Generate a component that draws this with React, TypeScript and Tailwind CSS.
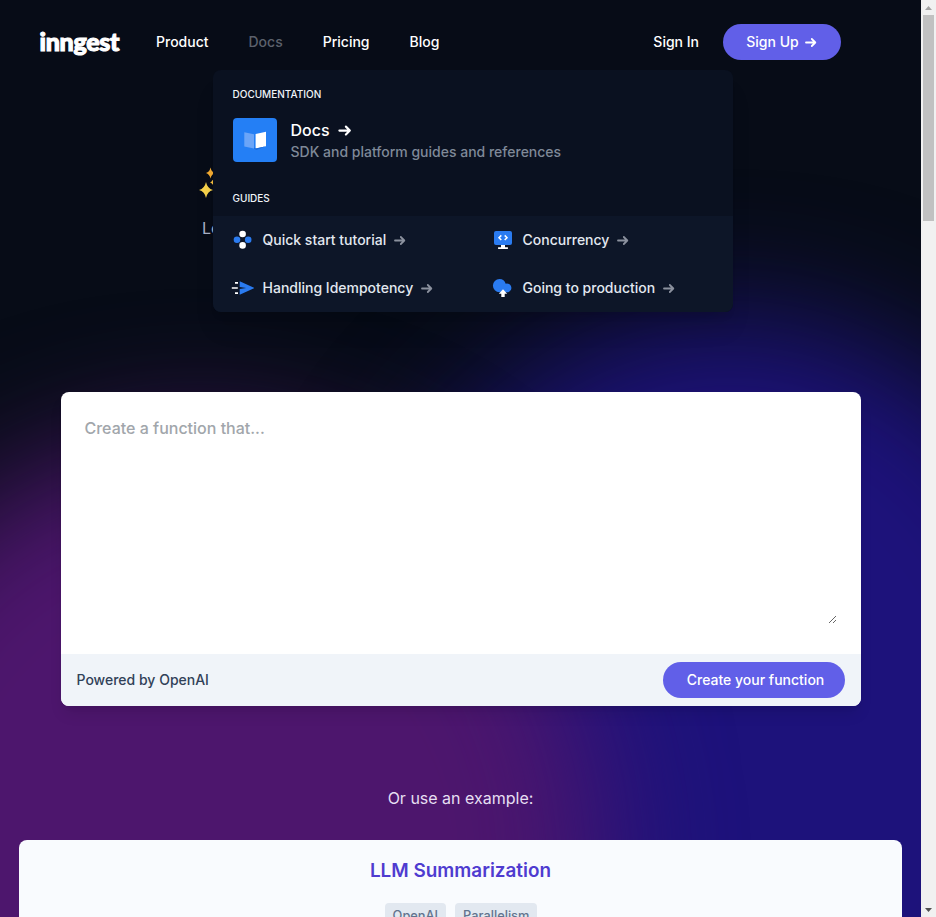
import React from 'react';

function Arrow({ size = 16, width = 1.8, className = '' }: { size?: number; width?: number; className?: string }) {
  return (
    <svg width={size} height={size} viewBox="0 0 16 16" fill="none" stroke="currentColor" strokeWidth={width} className={className}>
      <path d="M3 8.500h9M8.800 5l3.500 3.500L8.800 12" strokeLinecap="round" strokeLinejoin="round" />
    </svg>
  );
}

function BookIcon() {
  return (
    <svg width="24" height="24" viewBox="0 0 24 24">
      <path d="M1.3 4.2 11 6.3v14.3l-9.700-2z" fill="#6ba5f8" />
      <path d="M12.600 6 23 3.700v14.500l-10.400 2.200z" fill="#fff" />
      <path d="M11 20.600v-1l1.800.8 10-2.100-9.400 3.700z" fill="#1c6ad9" />
    </svg>
  );
}

function QuickStartIcon() {
  return (
    <svg width="24" height="24" viewBox="0 0 24 24">
      <circle cx="12.600" cy="6" r="3.300" fill="#fff" />
      <circle cx="12.600" cy="17.400" r="3.300" fill="#fff" />
      <circle cx="7" cy="11.800" r="3.300" fill="#2a7bf0" />
      <circle cx="18.200" cy="11.800" r="3.300" fill="#2a7bf0" />
    </svg>
  );
}

function SendIcon() {
  return (
    <svg width="24" height="24" viewBox="0 0 24 24">
      <path d="M5 6.800h3M1.800 12h6M5 17.200h3" stroke="#fff" strokeWidth="1.700" />
      <path d="M9.700 5.300 24.500 12 9.700 18.800V13l6.500-1-6.500-1z" fill="#2a7bf0" />
    </svg>
  );
}

function ScreenIcon() {
  return (
    <svg width="24" height="24" viewBox="0 0 24 24">
      <path d="M11 16h4v3.200h2.900V21H8.100v-1.800H11z" fill="#fff" />
      <rect x="4" y="3" width="18" height="14" rx="2" fill="#2a7bf0" />
      <path d="m11.300 7.400-2.300 2.300 2.300 2.300m3.400-4.600 2.300 2.300-2.300 2.300" fill="none" stroke="#fff" strokeWidth="1.500" />
    </svg>
  );
}

function CloudIcon() {
  return (
    <svg width="24" height="24" viewBox="0 0 24 24">
      <path d="M9.500 3a6.500 6.500 0 0 1 6.200 4.700A4.400 4.400 0 1 1 18.200 16.200H9.500A6.600 6.600 0 0 1 9.500 3z" fill="#2a7bf0" />
      <path d="m13 13.200 4.200 4.500h-2.500V21h-3.400v-3.300H8.800z" fill="#fff" />
    </svg>
  );
}

function Sparkles() {
  return (
    <svg width="32" height="34" viewBox="0 0 32 34" className="shrink-0">
      <path d="M8 16q1.300 6.400 7 8-5.700 1.600-7 8-1.300-6.400-7-8 5.700-1.600 7-8z" fill="#f8d34b" />
      <path d="M12.500 1.500q1 4.500 4.500 5.500-3.500 1-4.500 5.500-1-4.500-4.500-5.500 3.500-1 4.500-5.500z" fill="#f5ac32" />
      <path d="M14.500 13.700q.4 2.300 2.500 2.800-2.100.4-2.500 2.300-.5-1.900-2.500-2.300 2-.5 2.500-2.800z" fill="#f8c040" />
    </svg>
  );
}

const guides = [
  { label: 'Quick start tutorial', icon: <QuickStartIcon /> },
  { label: 'Concurrency', icon: <ScreenIcon /> },
  { label: 'Handling Idempotency', icon: <SendIcon /> },
  { label: 'Going to production', icon: <CloudIcon /> },
];

function DocsMenu() {
  return (
    <div className="absolute left-[213px] top-[70px] z-10 h-[242px] w-[520px] overflow-hidden rounded-lg bg-[#0a1120] shadow-xl">
      <div className="px-[19.500px] pt-4">
        <h2 className="text-[10px] font-medium leading-[17px] text-slate-100">DOCUMENTATION</h2>
        <a className="mt-[15px] flex h-11 items-center gap-3.5">
          <span className="flex size-11 items-center justify-center rounded bg-[#247ff5]"><BookIcon /></span>
          <span className="flex flex-col">
            <span className="flex items-center gap-1.5 text-base font-medium leading-6 text-white">Docs <Arrow size={18} width={1.900} className="-mt-px" /></span>
            <span className="text-sm font-medium leading-5 text-[#7f8998]">SDK and platform guides and references</span>
          </span>
        </a>
        <h2 className="mt-7 text-[10px] font-medium leading-[17px] text-slate-100">GUIDES</h2>
      </div>
      <div className="mt-[9px] grid h-24 grid-cols-2 bg-[#0d1628]">
        {guides.map((g) => (
          <a key={g.label} className="flex h-12 items-center pl-[17px] text-sm font-medium text-slate-200">
            <span className="mr-[8.500px]">{g.icon}</span>
            {g.label}
            <Arrow size={16} className="-mt-px ml-1.5 text-[#8b919e]" />
          </a>
        ))}
      </div>
    </div>
  );
}

function Header() {
  return (
    <header className="flex h-[84px] items-center pl-[39.500px] pr-20 text-sm font-medium text-white">
      <span className="w-[80.500px] pb-0.5 font-['Lato',sans-serif] text-[25px] font-black leading-none tracking-[-0.300px] [-webkit-text-stroke:1.100px_white]">inngest</span>
      <nav className="ml-9 flex items-center gap-10">
        <a>Product</a>
        <a className="text-[#5c616c]">Docs</a>
        <a>Pricing</a>
        <a>Blog</a>
      </nav>
      <div className="ml-auto flex items-center gap-6">
        <a>Sign In</a>
        <a className="flex h-9 w-[118px] items-center justify-center gap-1 rounded-full bg-[#615fe8] pl-px">Sign Up <Arrow /></a>
      </div>
    </header>
  );
}

function PromptCard() {
  return (
    <section className="mx-auto h-[314px] w-[800px] overflow-hidden rounded-lg bg-white shadow-lg">
      <div className="h-[262px] p-4 pb-0 pr-6">
        <textarea
          placeholder="Create a function that..."
          className="block h-[216px] w-full resize-y px-2 py-2 text-base font-medium leading-6 outline-none placeholder:text-[#a1a6ab]"
        />
      </div>
      <footer className="flex h-[52px] items-center justify-between bg-[#f0f4f9] px-4 text-sm font-medium text-slate-700">
        Powered by OpenAI
        <button className="flex h-9 w-[182px] items-center justify-center rounded-full bg-[#615fe8] pl-1 text-white">Create your function</button>
      </footer>
    </section>
  );
}

function Scrollbar() {
  return (
    <aside className="relative z-20 flex w-[15px] shrink-0 flex-col items-center bg-[#f1f1f1]">
      <svg width="15" height="15" viewBox="0 0 15 15"><path d="M4 10h7L7.500 6z" fill="#a3a3a3" /></svg>
      <div className="h-[206px] w-[11px] bg-[#c1c1c1]" />
      <svg width="15" height="15" viewBox="0 0 15 15" className="mt-auto"><path d="M4 6h7l-3.500 4z" fill="#505050" /></svg>
    </aside>
  );
}

export default function App() {
  return (
    <div className="flex h-[917px] w-[936px] overflow-hidden font-['Inter',sans-serif]">
      <main className="relative h-full w-[921px] overflow-hidden bg-[#070c17]">
        <div className="absolute left-[350px] top-[318px] h-[860px] w-[760px] rounded-[50%] bg-[#1d127b] blur-[64px]" />
        <div className="absolute left-[-200px] top-[438px] h-[860px] w-[800px] rounded-[50%] bg-[#4d166d] blur-[64px]" />
        <div className="relative">
          <Header />
          <div className="flex h-[308px] flex-col pl-[198px] pt-[82px]">
            <Sparkles />
            <p className="ml-1 mt-4 text-base leading-6 text-[#a9b2c8]">Le</p>
          </div>
          <PromptCard />
          <p className="mt-20 text-center text-base leading-6 text-[#e6dff2]">Or use an example:</p>
          <section className="mx-[19px] mt-[29.500px] flex h-[200px] flex-col items-center rounded-lg bg-[#f9fbfe] pt-4">
            <h3 className="text-[18.900px] font-semibold leading-[30px] text-[#4f3bd0]">LLM Summarization</h3>
            <div className="mt-[17px] flex gap-[9px] pl-px text-[12.800px] font-medium text-slate-500">
              <span className="rounded bg-[#e2e8f0] px-2 py-[3px]">OpenAI</span>
              <span className="rounded bg-[#e2e8f0] px-2 py-[3px]">Parallelism</span>
            </div>
          </section>
        </div>
        <DocsMenu />
      </main>
      <Scrollbar />
    </div>
  );
}
